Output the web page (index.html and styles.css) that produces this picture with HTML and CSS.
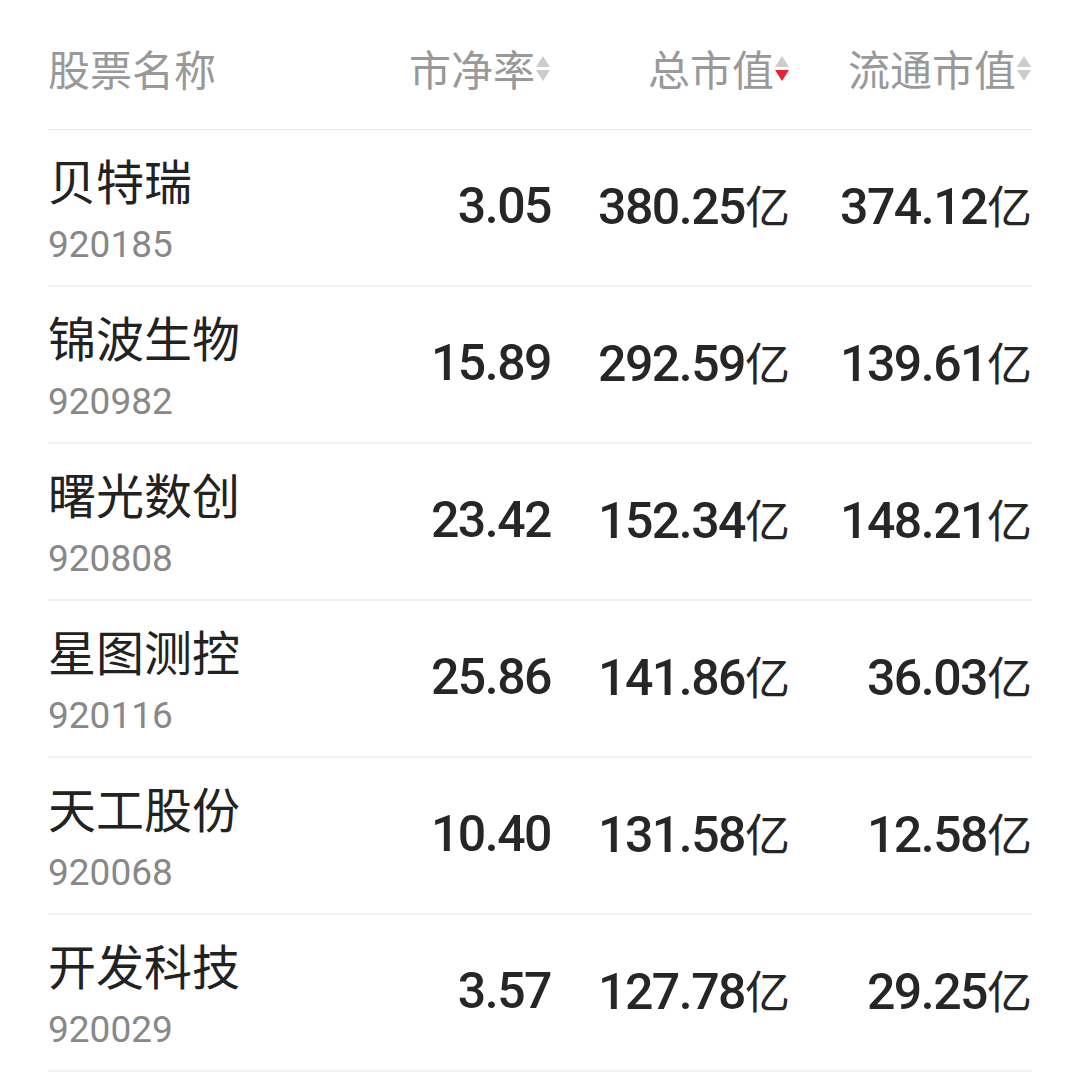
FILE: index.html
```html
<!DOCTYPE html>
<html lang="zh-CN">
<head>
<meta charset="utf-8">
<title>股票列表</title>
<link rel="stylesheet" href="styles.css">
</head>
<body>
<div class="table">
  <div class="head">
    <div class="hcell hname">股票名称</div>
    <div class="hcell">市净率<span class="sort"><i class="up"></i><i class="down"></i></span></div>
    <div class="hcell">总市值<span class="sort"><i class="up"></i><i class="down active"></i></span></div>
    <div class="hcell">流通市值<span class="sort"><i class="up"></i><i class="down"></i></span></div>
  </div>

  <div class="row">
    <div class="name"><div class="cn">贝特瑞</div><div class="code">920185</div></div>
    <div class="num">3.05</div>
    <div class="num">380.25<span class="unit">亿</span></div>
    <div class="num">374.12<span class="unit">亿</span></div>
  </div>
  <div class="row">
    <div class="name"><div class="cn">锦波生物</div><div class="code">920982</div></div>
    <div class="num">15.89</div>
    <div class="num">292.59<span class="unit">亿</span></div>
    <div class="num">139.61<span class="unit">亿</span></div>
  </div>
  <div class="row">
    <div class="name"><div class="cn">曙光数创</div><div class="code">920808</div></div>
    <div class="num">23.42</div>
    <div class="num">152.34<span class="unit">亿</span></div>
    <div class="num">148.21<span class="unit">亿</span></div>
  </div>
  <div class="row">
    <div class="name"><div class="cn">星图测控</div><div class="code">920116</div></div>
    <div class="num">25.86</div>
    <div class="num">141.86<span class="unit">亿</span></div>
    <div class="num">36.03<span class="unit">亿</span></div>
  </div>
  <div class="row">
    <div class="name"><div class="cn">天工股份</div><div class="code">920068</div></div>
    <div class="num">10.40</div>
    <div class="num">131.58<span class="unit">亿</span></div>
    <div class="num">12.58<span class="unit">亿</span></div>
  </div>
  <div class="row">
    <div class="name"><div class="cn">开发科技</div><div class="code">920029</div></div>
    <div class="num">3.57</div>
    <div class="num">127.78<span class="unit">亿</span></div>
    <div class="num">29.25<span class="unit">亿</span></div>
  </div>
</div>
</body>
</html>
```

FILE: styles.css
```css
html, body {
  margin: 0;
  padding: 0;
  background: #ffffff;
}

body {
  font-family: "Noto Sans CJK SC", "Noto Sans", sans-serif;
  color: #222222;
}

.table {
  padding: 0 48px;
}

.head,
.row {
  display: grid;
  grid-template-columns: 1fr 151px 239px 242px;
}

.head {
  height: 122px;
  padding-top: 7px;
  align-items: center;
  border-bottom: 1px solid #e8e8e8;
}

.hcell {
  display: flex;
  align-items: center;
  justify-content: flex-end;
  font-size: 42px;
  line-height: 56px;
  color: #999999;
}

.hcell.hname {
  justify-content: flex-start;
}

.sort {
  display: flex;
  flex-direction: column;
  gap: 3px;
  margin-left: 1px;
  width: 15px;
}

.sort i {
  display: block;
  width: 0;
  height: 0;
  border-left: 7.5px solid transparent;
  border-right: 7.5px solid transparent;
}

.sort .up {
  border-bottom: 11px solid #cccccc;
}

.sort .down {
  border-top: 11px solid #cccccc;
}

.sort .down.active {
  border-top-color: #e8222e;
}

.row {
  padding: 19px 0 17px;
  border-bottom: 2px solid #f2f2f2;
  align-items: center;
}

.name {
  display: flex;
  flex-direction: column;
  gap: 13px;
}

.cn {
  font-size: 48px;
  line-height: 60px;
  color: #222222;
}

.code {
  font-family: Roboto, "Noto Sans", sans-serif;
  font-size: 37px;
  line-height: 46px;
  color: #888888;
}

.num {
  text-align: right;
  font-family: Roboto, "Noto Sans", sans-serif;
  font-weight: 500;
  font-size: 50px;
  letter-spacing: -1.5px;
  line-height: 60px;
  color: #262626;
  padding-bottom: 5px;
}

.unit {
  font-family: "Noto Sans CJK SC", sans-serif;
  font-weight: 400;
  font-size: 45px;
  letter-spacing: 0;
}
```
